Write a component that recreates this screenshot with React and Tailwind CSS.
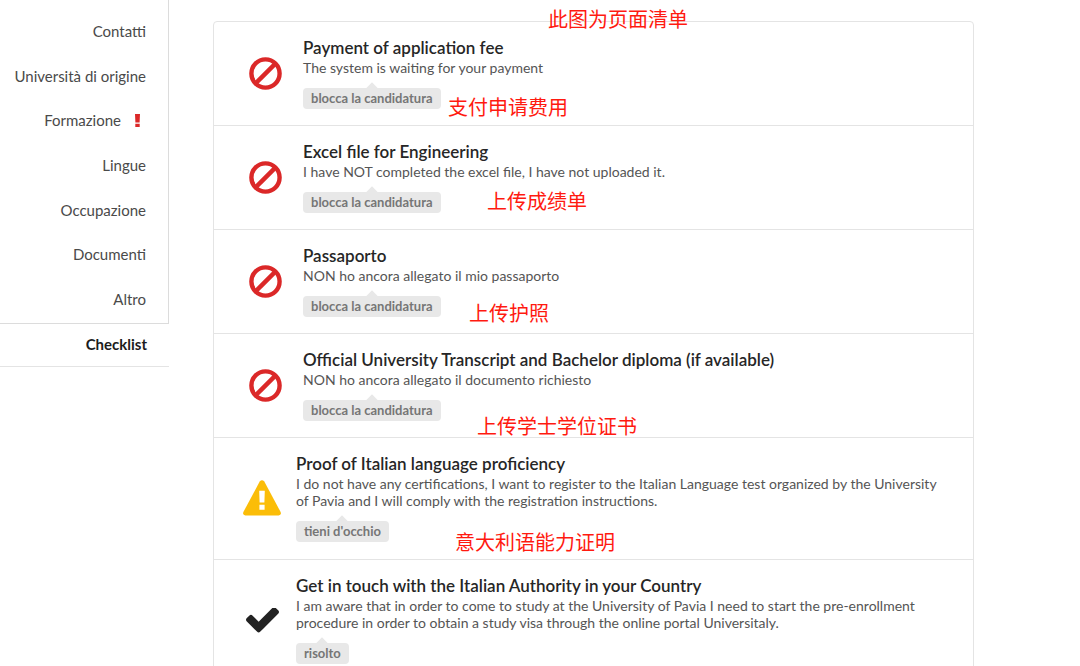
import React from 'react'

const NOTE = 'absolute whitespace-nowrap text-[20px] leading-6 text-[#ff1a10]'

const MENU = [
  { label: 'Contatti' },
  { label: 'Università di origine' },
  { label: 'Formazione', alert: true },
  { label: 'Lingue' },
  { label: 'Occupazione' },
  { label: 'Documenti' },
  { label: 'Altro' },
]

const BLOCKED = 'blocca la candidatura'

const CHECKS = [
  {
    status: 'blocked',
    title: 'Payment of application fee',
    text: 'The system is waiting for your payment',
    tag: BLOCKED,
    note: '支付申请费用',
    notePos: 'left-[234px] top-[73px]',
  },
  {
    status: 'blocked',
    title: 'Excel file for Engineering',
    text: 'I have NOT completed the excel file, I have not uploaded it.',
    tag: BLOCKED,
    note: '上传成绩单',
    notePos: 'left-[273px] top-[63px]',
  },
  {
    status: 'blocked',
    title: 'Passaporto',
    text: 'NON ho ancora allegato il mio passaporto',
    tag: BLOCKED,
    note: '上传护照',
    notePos: 'left-[255px] top-[71px]',
  },
  {
    status: 'blocked',
    title: 'Official University Transcript and Bachelor diploma (if available)',
    text: 'NON ho ancora allegato il documento richiesto',
    tag: BLOCKED,
    note: '上传学士学位证书',
    notePos: 'left-[263px] top-[80px]',
  },
  {
    status: 'warning',
    title: 'Proof of Italian language proficiency',
    text: 'I do not have any certifications, I want to register to the Italian Language test organized by the University of Pavia and I will comply with the registration instructions.',
    tag: "tieni d'occhio",
    note: '意大利语能力证明',
    notePos: 'left-[241px] top-[92px]',
  },
  {
    status: 'done',
    title: 'Get in touch with the Italian Authority in your Country',
    text: 'I am aware that in order to come to study at the University of Pavia I need to start the pre-enrollment procedure in order to obtain a study visa through the online portal Universitaly.',
    tag: 'risolto',
  },
]

function StatusIcon({ status }) {
  if (status === 'blocked') {
    return (
      <svg viewBox="0 0 33 33" className="w-[33px] h-[33px]" fill="none" stroke="#db2828" strokeWidth="4.4" aria-hidden="true">
        <circle cx="16.5" cy="16.5" r="14.1" />
        <path d="M6.6 26.4L26.4 6.6" />
      </svg>
    )
  }
  if (status === 'warning') {
    return (
      <svg viewBox="0 0 38 36" className="w-[38px] h-9" aria-hidden="true">
        <path
          fill="#fbbd08"
          d="M16.7 1.6Q19-1 21.3 1.6L37.5 31.8Q38.8 35 35.6 35.4H2.4Q-.8 35 .5 31.8Z"
        />
        <path fill="#fff" d="M16.2 10.8h5.6l-.4 11.8h-4.8zM16.4 24.8h5.2v5h-5.2z" />
      </svg>
    )
  }
  return (
    <svg viewBox="121 402 1550 1120" className="w-[33px] h-[25px]" aria-hidden="true">
      <path
        fill="#222"
        d="M1671 566q0 40-28 68l-724 724-136 136q-28 28-68 28t-68-28l-136-136-362-362q-28-28-28-68t28-68l136-136q28-28 68-28t68 28l294 295 656-657q28-28 68-28t68 28l136 136q28 28 28 68z"
      />
    </svg>
  )
}

function Tag({ children }) {
  return (
    <span className="relative inline-block rounded px-2 h-[21px] text-[13px] leading-5 font-bold text-[#767676] bg-[#e8e8e8]">
      <span className="absolute left-1/2 -top-1 -ml-1 w-2 h-2 rotate-45 bg-[#e8e8e8]" />
      <span className="relative">{children}</span>
    </span>
  )
}

function CheckItem({ status, title, text, tag, note, notePos }) {
  const blocked = status === 'blocked'
  return (
    <li className={`relative flex items-center pt-4 pr-9 border-b border-[#e4e4e4] last:border-b-0 ${blocked ? 'pb-4' : 'pb-[17px]'}`}>
      <div className={blocked ? 'flex justify-center shrink-0 w-[33px] ml-[35px] mr-[21px]' : 'flex justify-center shrink-0 w-[38px] ml-[29px] mr-[15px]'}>
        <StatusIcon status={status} />
      </div>
      <div>
        <h2 className="text-[17px] leading-5 font-semibold text-[#262626]">{title}</h2>
        <p className="text-[14px] leading-[17px] mt-px mb-3 text-[#555]">{text}</p>
        <div className="flex">
          <Tag>{tag}</Tag>
        </div>
      </div>
      {note && <span className={`${NOTE} ${notePos}`}>{note}</span>}
    </li>
  )
}

export default function App() {
  return (
    <div className="flex items-start h-screen overflow-hidden bg-white font-[Lato,'Noto_Sans_CJK_SC',sans-serif]">
      <nav className="shrink-0 w-[169px] text-[15px] leading-5 text-[#4a4a4a]">
        <div className="grid auto-rows-fr min-h-[324px] pt-[9px] pb-[2px] border-r border-b border-[#dcdcdc]">
          {MENU.map(({ label, alert }) => (
            <a key={label} href="#" className="flex items-center justify-end pr-[22px]">
              {label}
              {alert && (
                <svg viewBox="0 0 5 13" className="w-[5px] h-[13px] ml-[14px] mr-[6px]" fill="#db2828" aria-label="Attenzione">
                  <path d="M0 0h5l-.4 8.6H.4zM.3 9.8h4.4V13H.3z" />
                </svg>
              )}
            </a>
          ))}
        </div>
        <a href="#" aria-current="page" className="flex items-center justify-end h-[43px] pb-[2px] pr-[22px] font-bold text-[#1c1c1c] border-b border-[#e4e4e4]">
          Checklist
        </a>
      </nav>

      <main className="relative flex-1 min-w-0 ml-11 mr-[106px] mt-[21px]">
        <ul className="rounded border border-[#e4e4e4]">
          {CHECKS.map((item) => (
            <CheckItem key={item.title} {...item} />
          ))}
        </ul>
        <span className={`${NOTE} left-[335px] -top-[14px]`}>此图为页面清单</span>
      </main>
    </div>
  )
}
